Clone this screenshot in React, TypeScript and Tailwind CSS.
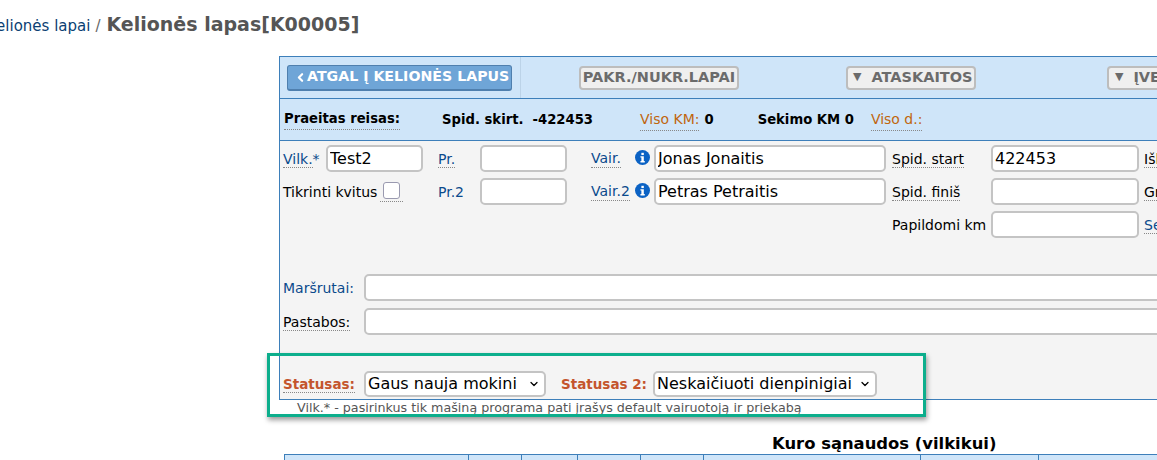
import { ChevronDown, ChevronLeft } from "lucide-react";

const font = "font-['DejaVu_Sans',sans-serif]";
const dotted = "border-b border-dotted border-[#888]";
const inputCls = "h-[27px] w-full rounded-[5px] border-2 border-[#c4c4c4] bg-white px-[2px] text-[16px] leading-none text-black outline-none";

function Info() {
  return (
    <svg viewBox="0 0 16 16" className="mb-[3px] h-[15px] w-[15px] shrink-0">
      <circle cx="8" cy="8" r="8" fill="#0b62c4" />
      <rect x="6.8" y="3" width="2.6" height="2.4" fill="#fff" />
      <path d="M5.8 6.6h3.6v5.2h1v1.4H5.8v-1.4h1V8H5.8z" fill="#fff" />
    </svg>
  );
}

function Label({ children, color = "text-[#0b4a8c]", underline = true }: { children: React.ReactNode; color?: string; underline?: boolean }) {
  return <span className={`text-[14px] leading-[18px] ${color} ${underline ? dotted : ""}`}>{children}</span>;
}

function NavButton({ children, className }: { children: React.ReactNode; className: string }) {
  return (
    <button className={`flex h-[24px] items-center rounded-[4px] border-2 border-[#bdbdbd] bg-[#efefef] text-[14.5px] font-bold whitespace-nowrap text-[#6b6b6b] ${className}`}>
      {children}
    </button>
  );
}

export default function App() {
  return (
    <div className={`h-[460px] w-[1157px] overflow-hidden bg-white ${font}`}>
      <div className="flex h-[56px] items-start pt-[12px] -ml-[13px] whitespace-nowrap">
        <span className="mt-[3px] text-[15px] text-[#0b3f73]">Kelionės lapai</span>
        <span className="mt-[3px] ml-[5px] text-[15px] text-[#666]">/</span>
        <span className="ml-[6px] text-[19px] font-bold leading-[24px] text-[#555]">Kelionės lapas[K00005]</span>
      </div>

      <div className="ml-[279px] w-[1100px]">
        <div className="border border-[#3d7fba]">
          <div className="flex h-[42px] items-center border-b border-[#3d7fba] bg-[#cfe5f9]">
            <div className="flex h-full w-[241px] items-center border-r border-[#bcd3e8] pl-[7px]">
              <button className="flex h-[26px] w-[225px] items-center rounded-[3px] border border-[#4f7fae] border-b-2 bg-[#6fa5d7] pl-[6px] text-[14.2px] font-bold whitespace-nowrap text-white">
                <ChevronLeft size={13} strokeWidth={4} />
                ATGAL Į KELIONĖS LAPUS
              </button>
            </div>
            <NavButton className="ml-[58px] w-[160px] justify-center">PAKR./NUKR.LAPAI</NavButton>
            <NavButton className="ml-[107px] w-[130px] gap-[10px] pl-[5px]"><span className="text-[11px]">▼</span>ATASKAITOS</NavButton>
            <NavButton className="ml-[131px] w-[130px] gap-[10px] pl-[6px]"><span className="text-[11px]">▼</span>ĮVEDIMAS</NavButton>
          </div>

          <div className="flex h-[42px] items-center border-b border-[#3d7fba] bg-[#cfe5f9] pl-[4px] text-[13.2px] whitespace-nowrap">
            <b className={`text-black ${dotted}`}>Praeitas reisas:</b>
            <b className="ml-[42px] text-black">Spid. skirt.</b>
            <b className="ml-[9px] text-black">-422453</b>
            <span className={`ml-[47px] text-[14px] text-[#c0660e] ${dotted}`}>Viso KM:</span>
            <b className="ml-[5px] text-black">0</b>
            <b className="ml-[44px] text-black">Sekimo KM 0</b>
            <span className={`ml-[17px] text-[14px] text-[#c0660e] ${dotted}`}>Viso d.:</span>
          </div>

          <div className="h-[258px] bg-[#f4f4f4] pl-[3px] pt-[4px]">
            <div className="grid grid-cols-[43px_97px_57px_87px_87px_232px_105px_148px_1fr] auto-rows-[27px] gap-y-[6px] items-center whitespace-nowrap">
              <div><Label>Vilk.</Label><span className="text-[14px] text-[#0b4a8c]">*</span></div>
              <input className={inputCls} defaultValue="Test2" />
              <div className="pl-[15px]"><Label>Pr.</Label></div>
              <input className={inputCls} />
              <div className="flex items-center justify-between pl-[24px] pr-[4px]"><Label>Vair.</Label><Info /></div>
              <input className={inputCls} defaultValue="Jonas Jonaitis" />
              <div className="pl-[6px]"><Label color="text-black">Spid. start</Label></div>
              <input className={inputCls} defaultValue="422453" />
              <div className="pl-[5px]"><Label color="text-black">Išlaidos</Label></div>

              <div className="col-span-2 flex items-center">
                <Label color="text-black" underline={false}>Tikrinti kvitus</Label>
                <span className={`ml-[3px] px-[3px] pb-[2px] ${dotted}`}>
                  <input type="checkbox" className="block h-[17px] w-[17px] appearance-none rounded-[3px] border border-[#9a9ab0] bg-white" />
                </span>
              </div>
              <div className="pl-[15px]"><Label underline={false}>Pr.2</Label></div>
              <input className={inputCls} />
              <div className="flex items-center justify-between pl-[24px] pr-[4px]"><Label>Vair.2</Label><Info /></div>
              <input className={inputCls} defaultValue="Petras Petraitis" />
              <div className="pl-[6px]"><Label color="text-black">Spid. finiš</Label></div>
              <input className={inputCls} />
              <div className="pl-[5px]"><Label color="text-black">Grupė</Label></div>

              <div className="col-start-7 pl-[6px]"><Label color="text-black" underline={false}>Papildomi km</Label></div>
              <input className={inputCls} />
              <div className="pl-[5px]"><Label>Sekimas</Label></div>
            </div>

            <div className="mt-[36px] flex flex-col gap-[7px]">
              <div className="flex items-center">
                <div className="w-[81px] shrink-0"><Label underline={false}>Maršrutai:</Label></div>
                <input className={inputCls} />
              </div>
              <div className="flex items-center">
                <div className="w-[81px] shrink-0"><Label color="text-black">Pastabos:</Label></div>
                <input className={inputCls} />
              </div>
            </div>

            <div className="mt-[36px] flex items-center whitespace-nowrap">
              <div className="w-[81px] shrink-0"><span className={`text-[13.5px] font-bold text-[#c4552d] ${dotted}`}>Statusas:</span></div>
              <div className="flex h-[26px] w-[182px] items-center justify-between rounded-[5px] border-2 border-[#c4c4c4] bg-white pl-[2px] pr-[4px] text-[16px] text-black">
                Gaus nauja mokini<ChevronDown size={12} strokeWidth={2.5} />
              </div>
              <b className="ml-[15px] w-[92px] text-[13.5px] text-[#c4552d]">Statusas 2:</b>
              <div className="flex h-[26px] w-[224px] items-center justify-between rounded-[5px] border-2 border-[#c4c4c4] bg-white pl-[2px] pr-[4px] text-[16px] text-black">
                Neskaičiuoti dienpinigiai<ChevronDown size={12} strokeWidth={2.5} />
              </div>
            </div>
          </div>
        </div>

        <p className="pl-[18px] text-[12.7px] leading-[16px] text-[#555]">Vilk.* - pasirinkus tik mašiną programa pati įrašys default vairuotoją ir priekabą</p>
        <h2 className="mt-[18px] ml-[493px] text-[16.4px] font-bold leading-[20px] whitespace-nowrap text-black">Kuro sąnaudos (vilkikui)</h2>
        <div className="ml-[5px] grid h-[40px] grid-cols-[184px_53px_56px_63px_63px_217px_118px_1fr] border-l border-t border-[#3d7fba] bg-[#cfe5f9] *:border-r *:border-[#3d7fba]">
          <div /><div /><div /><div /><div /><div /><div /><div />
        </div>
      </div>

      <div className="pointer-events-none absolute left-[267px] top-[353px] h-[64px] w-[659px] border-[3px] border-[#0cae8c] shadow-[1px_3px_5px_rgba(0,0,0,0.4)]" />
    </div>
  );
}
